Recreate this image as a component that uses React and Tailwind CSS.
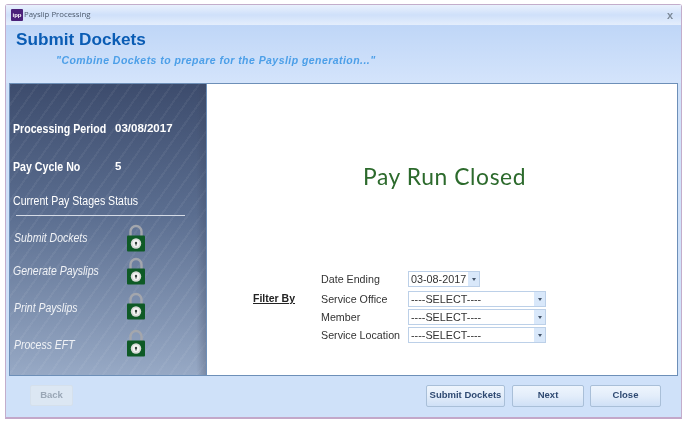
const font = "[font-family:'Liberation_Sans',Arial,sans-serif]";

const stages = [
  { label: "Submit Dockets", rowClass: "h-[33px]", textClass: "pt-[5px] ml-px" },
  { label: "Generate Payslips", rowClass: "h-[35px]", textClass: "pt-[5px]" },
  { label: "Print Payslips", rowClass: "h-[37px]", textClass: "pt-[7px] ml-px" },
  { label: "Process EFT", rowClass: "h-[37px]", textClass: "pt-[7px] ml-px" },
];

function Lock() {
  return (
    <svg viewBox="0 0 20 28" className="h-[28px] w-[20px] shrink-0" aria-hidden>
      <path d="M4.5 12V7.5a5.5 5.5 0 0 1 11 0V12" fill="none" stroke="#a3a6ad" strokeWidth="2.4" />
      <rect x="1" y="11.5" width="18" height="16" rx="1" fill="#0e5a26" />
      <circle cx="10" cy="19.5" r="5.2" fill="#d8dad8" />
      <circle cx="10" cy="19.5" r="3.4" fill="#f4f4f2" />
      <circle cx="10" cy="19" r="1.2" fill="#33413a" />
      <rect x="9.5" y="19" width="1" height="2.6" fill="#33413a" />
    </svg>
  );
}

function Select({ value, wide }) {
  return (
    <div className={`flex h-[16px] items-center border border-[#bcd0e8] bg-white pl-[2px] text-[10.8px] leading-none text-[#333] ${wide ? "w-[138px]" : "w-[72px]"}`}>
      <span className="flex-1 whitespace-nowrap">{value}</span>
      <span className="flex h-full w-[11px] items-center justify-center bg-[#d9e8fa]">
        <span className="h-0 w-0 border-x-[2px] border-t-[3px] border-x-transparent border-t-[#44546a]" />
      </span>
    </div>
  );
}

function Button({ children, className = "" }) {
  return (
    <button
      type="button"
      className={`flex h-[22px] items-center justify-center whitespace-nowrap rounded-[2px] border border-[#a9bfd8] bg-gradient-to-b from-[#eef5fd] via-[#e3edfa] to-[#cfe0f6] text-[9.5px] font-bold text-[#2f4a72] ${className}`}
    >
      {children}
    </button>
  );
}

export default function App() {
  return (
    <div className={`h-[421px] w-[688px] overflow-hidden bg-white pl-[5px] pt-[4px] blur-[0.4px] ${font}`}>
      <div className="flex h-[415px] w-[677px] flex-col rounded-t-[3px] border border-[#c3adcb] border-b-2 border-b-[#c3a7c9] bg-[#cfe1f9]">
        {/* title bar */}
        <div className="flex h-[20px] items-center bg-gradient-to-b from-[#e9f1fd] via-[#cfe0fa] to-[#e4eefc] pl-[5px] pr-[8px]">
          <span className="flex h-[12px] w-[12px] items-center justify-center rounded-[1px] bg-[#4b2179] text-[6px] font-bold leading-none text-white">
            ipp
          </span>
          <span className="ml-[1px] flex-1 text-[7.8px] text-[#4d5a6b] [font-family:'Open_Sans',sans-serif]">
            Payslip Processing
          </span>
          <span className="text-[11px] font-bold leading-none text-[#7d8a99]">x</span>
        </div>

        {/* header */}
        <div className="h-[58px] bg-gradient-to-b from-[#bfd6f7] to-[#d4e4fb] pl-[10px] pt-[4px]">
          <div className="text-[17.2px] font-bold leading-[20px] text-[#0a5cb4]">Submit Dockets</div>
          <div className="ml-[40px] mt-[4px] text-[10.5px] font-bold italic leading-[14px] tracking-[0.45px] text-[#4c9fe8]">
            "Combine Dockets to prepare for the Payslip generation..."
          </div>
        </div>

        {/* content */}
        <div className="mx-[3px] flex h-[293px] border border-[#6d8fb8]">
          <div className="w-[196px] shrink-0 bg-[linear-gradient(to_right,transparent_95%,rgba(60,70,95,0.3)),repeating-linear-gradient(125deg,rgba(255,255,255,0.05)_0_2px,transparent_2px_11px),linear-gradient(to_bottom,#3d4c6d,#5b6e90_45%,#97a9c5)] pl-[3px] pt-[35px] text-white">
            <div className="flex h-[20px] items-center">
              <span className="w-[102px] origin-left scale-x-[0.885] whitespace-nowrap text-[12px] font-bold">Processing Period</span>
              <span className="text-[11.5px] font-bold">03/08/2017</span>
            </div>
            <div className="mt-[18px] flex h-[20px] items-center">
              <span className="w-[102px] origin-left scale-x-[0.885] whitespace-nowrap text-[12px] font-bold">Pay Cycle No</span>
              <span className="text-[11.5px] font-bold">5</span>
            </div>
            <div className="mt-[14px] h-[20px] origin-left scale-x-[0.845] whitespace-nowrap text-[12.5px] leading-[20px]">
              Current Pay Stages Status
            </div>
            <div className="ml-[3px] mt-[4px] h-px w-[169px] bg-[#d5dbe6]" />
            <div className="mt-[8px]">
              {stages.map((s) => (
                <div key={s.label} className={`flex items-start ${s.rowClass}`}>
                  <span className="w-[113px]">
                    <span className={`block origin-left scale-x-[0.84] whitespace-nowrap text-[12.5px] italic text-[#f0f2f6] ${s.textClass}`}>
                      {s.label}
                    </span>
                  </span>
                  <Lock />
                </div>
              ))}
            </div>
          </div>

          <div className="flex-1 border-l border-[#6d8fb8] bg-white">
            <div className="mt-[76px] pl-[156px] text-[22.8px] leading-[32px] tracking-[0.6px] text-[#2c6a2c] [font-family:Lato,sans-serif]">
              Pay Run Closed
            </div>
            <div className="mt-[79px] flex items-start pl-[46px] text-[10.7px] text-[#333]">
              <div className="mt-[19px] w-[68px] text-[10.5px] font-bold leading-[16px] text-[#222] underline">Filter By</div>
              <div className="grid grid-cols-[87px_auto] items-center gap-y-[2px] leading-[16px]">
                <span>Date Ending</span>
                <Select value="03-08-2017" />
                <span className="mt-[2px]">Service Office</span>
                <div className="mt-[2px]"><Select value="----SELECT----" wide /></div>
                <span>Member</span>
                <Select value="----SELECT----" wide />
                <span>Service Location</span>
                <Select value="----SELECT----" wide />
              </div>
            </div>
          </div>
        </div>

        {/* footer */}
        <div className="flex flex-1 items-center pb-[2px] pl-[24px] pr-[20px]">
          <button
            type="button"
            className="h-[21px] w-[43px] rounded-[2px] border border-[#d5e0ec] bg-[#dce7f3] text-[9.5px] font-bold text-[#9aa7b6]"
          >
            Back
          </button>
          <div className="ml-auto flex gap-[6px]">
            <Button className="mr-px w-[79px]">Submit Dockets</Button>
            <Button className="w-[72px]">Next</Button>
            <Button className="w-[71px]">Close</Button>
          </div>
        </div>
      </div>
    </div>
  );
}
